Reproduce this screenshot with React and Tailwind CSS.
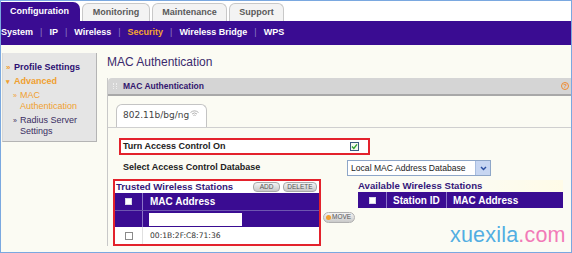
import React from "react";

const PURPLE = "bg-[#3a0c92]";

function Sep() {
  return <span className="text-[#8a7cc4] font-normal px-[7px]">|</span>;
}

function Wifi() {
  return (
    <svg width="9" height="7" viewBox="0 0 9 7" className="ml-[1px] -mt-[6px]">
      <path d="M0.5 2.5 Q4.5 -0.8 8.5 2.5" stroke="#aaa" strokeWidth="0.9" fill="none" />
      <path d="M2 4 Q4.5 1.8 7 4" stroke="#aaa" strokeWidth="0.9" fill="none" />
      <path d="M3.4 5.5 Q4.5 4.6 5.6 5.5" stroke="#aaa" strokeWidth="0.9" fill="none" />
    </svg>
  );
}

function Box({ dark }) {
  return (
    <span
      className={
        dark
          ? "block w-[7px] h-[7px] bg-white border border-[#d8d8e8]"
          : "block w-[8px] h-[8px] bg-white border border-[#8a8a8a]"
      }
    />
  );
}

function SmallBtn({ children, w }) {
  return (
    <span
      className={`${w} h-[10px] flex items-center justify-center rounded-[4px] border border-[#a8a8a8] bg-gradient-to-b from-[#f4f4f4] to-[#c9c9c9] text-[6.5px] leading-none text-[#555]`}
    >
      {children}
    </span>
  );
}

export default function App() {
  return (
    <div
      className="relative w-[572px] h-[253px] overflow-hidden border border-[#7aa8e0] bg-[#fbfbf3] text-[#222]"
      style={{ fontFamily: '"Liberation Sans", Arial, sans-serif' }}
    >
      {/* top tabs */}
      <div className="flex items-end h-[20px] bg-white gap-[2px]">
        <div className={`w-[79px] h-[19px] ${PURPLE} rounded-tr-[7px] flex items-center pl-[9px] text-white font-bold text-[9px]`}>
          Configuration
        </div>
        <div className="w-[68px] h-[18px] bg-[#f3f3f3] border border-b-0 border-[#c8c8c8] rounded-t-[6px] flex items-center justify-center text-[#5a5a5a] font-bold text-[9px]">
          Monitoring
        </div>
        <div className="w-[75px] h-[18px] bg-[#f3f3f3] border border-b-0 border-[#c8c8c8] rounded-t-[6px] flex items-center justify-center text-[#5a5a5a] font-bold text-[9px]">
          Maintenance
        </div>
        <div className="w-[55px] h-[18px] bg-[#f3f3f3] border border-b-0 border-[#c8c8c8] rounded-t-[6px] flex items-center justify-center text-[#5a5a5a] font-bold text-[9px]">
          Support
        </div>
      </div>

      {/* nav bar */}
      <div className={`h-[24px] ${PURPLE} flex items-center text-white font-bold text-[9px] pl-[0px]`}>
        <span>System</span>
        <Sep />
        <span>IP</span>
        <Sep />
        <span>Wireless</span>
        <Sep />
        <span className="text-[#f5a830]">Security</span>
        <Sep />
        <span>Wireless Bridge</span>
        <Sep />
        <span>WPS</span>
      </div>

      {/* body */}
      <div className="flex">
        {/* sidebar */}
        <div className="ml-[1px] mt-[8px] w-[95px] h-[89px] bg-[#e5e5e5] border-r border-b border-[#b4b4b4] border-l border-l-[#d8d8d8] pt-[8px] text-[9px]">
          <div className="flex items-center h-[14px] pl-[3px] font-bold text-[#2c0f72]">
            <span className="text-[#f0a030] w-[8px] text-[8px]">»</span>
            <span>Profile Settings</span>
          </div>
          <div className="flex items-center h-[14px] pl-[3px] font-bold text-[#f0a030]">
            <span className="w-[8px] text-[7px]">▾</span>
            <span>Advanced</span>
          </div>
          <div className="pl-[10px] text-[#f0a030] leading-[11px] mt-[1px]">
            <div className="flex">
              <span className="w-[7px] text-[7px]">»</span>
              <span>MAC</span>
            </div>
            <div className="pl-[7px]">Authentication</div>
          </div>
          <div className="pl-[10px] text-[#3a2d62] leading-[11px] mt-[3px]">
            <div className="flex">
              <span className="w-[7px] text-[7px]">»</span>
              <span>Radius Server</span>
            </div>
            <div className="pl-[7px]">Settings</div>
          </div>
        </div>

        {/* main */}
        <div className="flex-1 pl-[10px]">
          <div className="mt-[10px] h-[14px] leading-[14px] text-[12px] text-[#3a2a6c]">MAC Authentication</div>

          <div className="mt-[9px] border-l border-[#c8c8c8]">
            {/* panel header */}
            <div className="h-[18px] bg-[#d5d5d5] border-b-2 border-[#a8a8a8] rounded-tl-[4px] flex items-center pl-[5px] pr-[2px]">
              <span className="w-[4px] h-[6px] border-l border-r border-dotted border-[#eee] mr-[6px]" />
              <span className="font-bold text-[8.5px] text-[#33166e]">MAC Authentication</span>
              <span className="ml-auto w-[8px] h-[8px] rounded-full border border-[#f08a30] text-[#f08a30] text-[6px] leading-none font-bold flex items-center justify-center">
                ?
              </span>
            </div>

            {/* tab */}
            <div className="pt-[8px] pl-[8px] border-b border-[#cfcfcf]">
              <div className="w-[91px] h-[23px] bg-white border border-b-0 border-[#c4c4c4] rounded-t-[6px] flex items-center pl-[6px] text-[9px] text-[#444]" style={{ fontFamily: '"DejaVu Sans", Verdana, sans-serif' }}>
                <span>802.11b/bg/ng</span>
                <Wifi />
              </div>
            </div>

            {/* turn on */}
            <div className="mt-[10px] ml-[11px] w-[251px] h-[17px] border-2 border-[#e3222c] bg-white flex items-center pl-[2px] pr-[9px]">
              <span className="font-bold text-[9px] text-[#222]">Turn Access Control On</span>
              <span className="ml-auto w-[9px] h-[9px] border border-[#3a5a80] bg-[#f4f9f0] flex items-center justify-center">
                <svg width="7" height="7" viewBox="0 0 7 7">
                  <path d="M1 3.6 L2.8 5.4 L6 1.4" stroke="#2fa02f" strokeWidth="1.4" fill="none" />
                </svg>
              </span>
            </div>

            {/* select row */}
            <div className="mt-[5px] flex items-center h-[16px]">
              <span className="w-[239px] pl-[15px] font-bold text-[9px] text-[#222]">Select Access Control Database</span>
              <div className="w-[144px] h-[16px] bg-white border border-[#8ea6c8] flex items-center">
                <span className="flex-1 pl-[3px] text-[8.6px] text-[#222]">Local MAC Address Database</span>
                <span className="w-[15px] h-full bg-[#c7d6f2] border-l border-[#a8bde0] flex items-center justify-center">
                  <svg width="7" height="5" viewBox="0 0 7 5">
                    <path d="M1 1 L3.5 3.6 L6 1" stroke="#2a4ea0" strokeWidth="1.4" fill="none" />
                  </svg>
                </span>
              </div>
            </div>

            {/* lists row */}
            <div className="mt-[3px] flex">
              {/* trusted */}
              <div className="ml-[5px] w-[208px] h-[67px] border-2 border-[#e3222c] bg-white flex flex-col">
                <div className="h-[12px] flex items-center pl-[1px] pr-[2px]">
                  <span className="font-bold text-[9.6px] text-[#35187a]">Trusted Wireless Stations</span>
                  <span className="ml-auto flex gap-[3px]">
                    <SmallBtn w="w-[27px]">ADD</SmallBtn>
                    <SmallBtn w="w-[34px]">DELETE</SmallBtn>
                  </span>
                </div>
                <div className={`h-[17px] ${PURPLE} flex`}>
                  <div className="w-[28px] border-r border-[#8c74c8] flex items-center justify-center">
                    <Box dark />
                  </div>
                  <div className="flex items-center pl-[7px] text-white font-bold text-[10px]">MAC Address</div>
                </div>
                <div className={`h-[17px] ${PURPLE} border-t border-[#6e56b0] flex`}>
                  <div className="w-[28px] border-r border-[#8c74c8]" />
                  <div className="flex items-center pl-[6px]">
                    <span className="block w-[93px] h-[13px] bg-white" />
                  </div>
                </div>
                <div className="flex-1 flex">
                  <div className="w-[28px] border-r border-[#e0e0e0] flex items-center justify-center">
                    <Box />
                  </div>
                  <div className="flex items-center pl-[7px] text-[7.6px] text-[#333]" style={{ fontFamily: '"DejaVu Sans", Verdana, sans-serif' }}>
                    00:1B:2F:C8:71:36
                  </div>
                </div>
              </div>

              {/* move */}
              <div className="w-[37px] pl-[2px] pt-[33px]">
                <span className="w-[32px] h-[11px] rounded-full border border-[#b0b0b0] bg-gradient-to-b from-[#f4f4f4] to-[#cacaca] flex items-center pl-[2px] gap-[1px] text-[6.5px] text-[#555] leading-none">
                  <span className="w-[5px] h-[5px] rounded-full bg-[#f0a030]" />
                  MOVE
                </span>
              </div>

              {/* available */}
              <div className="w-[205px] pt-[1px]">
                <div className="h-[12px] flex items-center bg-gradient-to-r from-transparent via-transparent to-[#fffbe8]">
                  <span className="font-bold text-[9.6px] text-[#35187a]">Available Wireless Stations</span>
                </div>
                <div className={`h-[16px] ${PURPLE} flex text-white font-bold text-[10px]`}>
                  <div className="w-[29px] border-r border-[#8c74c8] flex items-center justify-center">
                    <Box dark />
                  </div>
                  <div className="w-[60px] border-r border-[#8c74c8] flex items-center pl-[6px]">Station ID</div>
                  <div className="flex items-center pl-[6px]">MAC Address</div>
                </div>
              </div>
            </div>
          </div>
        </div>
      </div>

      {/* watermark */}
      <div className="absolute left-[449px] top-[224px] text-[21.5px] leading-none tracking-[0.2px]">
        <span className="text-[#52aee2]">xuexila</span>
        <span className="text-[#f27ab8]">.com</span>
      </div>
    </div>
  );
}
